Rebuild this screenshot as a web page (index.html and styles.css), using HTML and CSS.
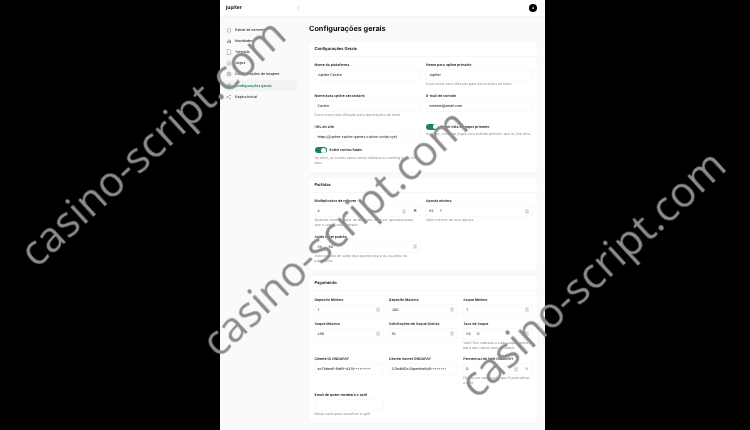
FILE: index.html
```html
<!DOCTYPE html>
<html lang="pt-BR">
<head>
    <meta charset="UTF-8">
    <title>Configurações gerais</title>
    <link rel="stylesheet" href="styles.css">
</head>
<body>
    <svg class="defs" width="0" height="0">
        <symbol id="stepper" viewBox="0 0 6 7">
            <rect x="0.4" y="0.4" width="5.2" height="6.2" rx="1" fill="#eee" stroke="#ccc" stroke-width="0.5"/>
            <path d="M2 2.9 3 1.9 4 2.9M2 4.1 3 5.1 4 4.1" fill="none" stroke="#555" stroke-width="0.6"/>
        </symbol>
    </svg>

    <div class="app">
        <!-- Top bar -->
        <header class="topbar">
            <div class="brand">
                <span class="brand-name">jupiter</span>
                <svg class="collapse" viewBox="0 0 6 8"><path d="M4 1 1.6 4 4 7" fill="none" stroke="#aaa" stroke-width="0.6"/></svg>
            </div>
            <div class="avatar">A</div>
        </header>

        <div class="layout">
            <!-- Sidebar -->
            <nav class="sidebar">
                <a class="nav-item">
                    <svg viewBox="0 0 12 12"><path d="M1.5 6 6 1.8 10.500 6M3 5v5.200h6V5" fill="none" stroke="#777" stroke-width="0.8"/></svg>
                    Painel de controle
                </a>
                <a class="nav-item">
                    <svg viewBox="0 0 12 12"><path d="M2 10V7h2v3zM5 10V3h2v7zM8 10V5h2v5z" fill="#777"/></svg>
                    Novidades
                </a>
                <a class="nav-item">
                    <svg viewBox="0 0 12 12"><path d="M2.500 1h5l2 2v8h-7z" fill="none" stroke="#777" stroke-width="0.8"/></svg>
                    Tutoriais
                </a>
                <a class="nav-item">
                    <svg viewBox="0 0 12 12"><path d="M6 1.500 10.500 5 6 8 1.500 5zM3 7v3h6V7" fill="none" stroke="#777" stroke-width="0.8"/></svg>
                    Jogos
                </a>
                <a class="nav-item">
                    <svg viewBox="0 0 12 12"><circle cx="6" cy="6" r="4.500" fill="#ccc" stroke="#888" stroke-width="0.6"/></svg>
                    Configurações de imagem
                </a>
                <a class="nav-item active">
                    <svg viewBox="0 0 12 12"><circle cx="6" cy="6" r="4.500" fill="none" stroke="#1f9d6c" stroke-width="1"/><circle cx="6" cy="6" r="2.200" fill="#1f9d6c"/></svg>
                    Configurações gerais
                </a>
                <a class="nav-item">
                    <svg viewBox="0 0 12 12"><path d="M2 6 8 3M2 6 8 9" fill="none" stroke="#777" stroke-width="0.8"/><circle cx="2" cy="6" r="1.200" fill="#777"/><circle cx="9" cy="2.500" r="1" fill="#777"/><circle cx="9" cy="9.500" r="1" fill="#777"/></svg>
                    Página inicial
                </a>
            </nav>

            <main class="content">
                <h1>Configurações gerais</h1>

                <!-- Configurações Gerais -->
                <section class="card">
                    <h2 class="card-title">Configurações Gerais</h2>
                    <div class="card-body cols-2">
                        <div class="field">
                            <label>Nome da plataforma</label>
                            <div class="input">Jupitor Casino</div>
                        </div>
                        <div class="field">
                            <label>Nome para upline primário</label>
                            <div class="input">Jupitor</div>
                            <p class="help">Esse nome será utilizado para decorações de texto</p>
                        </div>
                        <div class="field">
                            <label>Nome para upline secundário</label>
                            <div class="input">Casino</div>
                            <p class="help">Esse nome será utilizado para decorações de texto</p>
                        </div>
                        <div class="field">
                            <label>E-mail de contato</label>
                            <div class="input">contato@email.com</div>
                        </div>
                        <div class="field">
                            <label>URL do site</label>
                            <div class="input">https://jupiter-casino-games.casino-script.xyz/</div>
                        </div>
                        <div class="field">
                            <div class="switch-row"><span class="switch"></span><span class="switch-label">Exibir lista de jogos primeiro</span></div>
                            <p class="help">Se ativo, a lista de jogos será exibida primeiro que os live wins</p>
                        </div>
                        <div class="field">
                            <div class="switch-row"><span class="switch"></span><span class="switch-label">Exibir contas fakes</span></div>
                            <p class="help">Se ativo, as contas fakes serão exibidas no ranking e nos live wins</p>
                        </div>
                    </div>
                </section>

                <!-- Partidas -->
                <section class="card">
                    <h2 class="card-title">Partidas</h2>
                    <div class="card-body cols-2">
                        <div class="field">
                            <label>Multiplicador de rollover</label>
                            <div class="input number">
                                <span class="value">2</span>
                                <svg class="step"><use href="#stepper"/></svg>
                                <span class="suffix times">✕</span>
                            </div>
                            <p class="help">Quantas vezes o valor do depósito deve ser apostado para que o saque seja liberado</p>
                        </div>
                        <div class="field">
                            <label>Aposta mínima</label>
                            <div class="input number">
                                <span class="prefix">R$</span>
                                <span class="value">1</span>
                                <svg class="step"><use href="#stepper"/></svg>
                            </div>
                            <p class="help">Valor mínimo de uma aposta</p>
                        </div>
                        <div class="field">
                            <label>Saldo reset padrão</label>
                            <div class="input number">
                                <span class="prefix">R$</span>
                                <span class="value">50</span>
                                <svg class="step"><use href="#stepper"/></svg>
                            </div>
                            <p class="help">Valor padrão de saldo que aparece para os usuários na plataforma</p>
                        </div>
                    </div>
                </section>

                <!-- Pagamento -->
                <section class="card">
                    <h2 class="card-title">Pagamento</h2>
                    <div class="card-body cols-3">
                        <div class="field">
                            <label>Depósito Mínimo</label>
                            <div class="input number"><span class="value">1</span><svg class="step"><use href="#stepper"/></svg></div>
                        </div>
                        <div class="field">
                            <label>Depósito Máximo</label>
                            <div class="input number"><span class="value">300</span><svg class="step"><use href="#stepper"/></svg></div>
                        </div>
                        <div class="field">
                            <label>Saque Mínimo</label>
                            <div class="input number"><span class="value">1</span><svg class="step"><use href="#stepper"/></svg></div>
                        </div>
                        <div class="field">
                            <label>Saque Máximo</label>
                            <div class="input number"><span class="value">250</span><svg class="step"><use href="#stepper"/></svg></div>
                        </div>
                        <div class="field">
                            <label>Solicitações de Saque Diárias</label>
                            <div class="input number"><span class="value">10</span><svg class="step"><use href="#stepper"/></svg></div>
                        </div>
                        <div class="field">
                            <label>Taxa de Saque</label>
                            <div class="input number"><span class="prefix">R$</span><span class="value">0</span><svg class="step"><use href="#stepper"/></svg></div>
                            <p class="help">Valor fixo cobrado a cada saque, deixe 0 para não cobrar taxa de saque</p>
                        </div>
                        <div class="field">
                            <label>Cliente ID ONDAPAY</label>
                            <div class="input">ac79dee0-9a65-4218-••••••••</div>
                        </div>
                        <div class="field">
                            <label>Cliente Secret ONDAPAY</label>
                            <div class="input">COndNDo35pmhkeNyE••••••••</div>
                        </div>
                        <div class="field">
                            <label>Percentual de Split ONDAPAY</label>
                            <div class="input number"><span class="value">0</span><svg class="step"><use href="#stepper"/></svg><span class="suffix">%</span></div>
                            <p class="help">Defina um valor maior que 0 para ativar o split</p>
                        </div>
                        <div class="field">
                            <label>Email de quem receberá o split</label>
                            <div class="input"></div>
                            <p class="help">Deixe vazio para desativar o split</p>
                        </div>
                    </div>
                </section>
            </main>
        </div>
    </div>

    <!-- Watermarks over the screenshot -->
    <div class="watermark wm-1">casino-script.com</div>
    <div class="watermark wm-2">casino-script.com</div>
    <div class="watermark wm-3">casino-script.com</div>
</body>
</html>
```

FILE: styles.css
```css
* {
    margin: 0;
    padding: 0;
    box-sizing: border-box;
}

html, body {
    height: 430px;
    overflow: hidden;
}

body {
    position: relative;
    background-color: #000;
    font-family: Inter, "Liberation Sans", sans-serif;
    color: #222;
    text-rendering: geometricPrecision;
}

.defs {
    position: absolute;
}

.app {
    width: 325px;
    height: 430px;
    margin-left: 220px;
    background-color: #fafafa;
    overflow: hidden;
    filter: blur(0.2px);
}

/* Top bar */
.topbar {
    display: flex;
    align-items: center;
    justify-content: space-between;
    height: 16px;
    padding: 0 8px 0 6px;
    background-color: #fff;
    box-shadow: 0 0.5px 0 #eee;
}

.brand {
    display: flex;
    align-items: center;
    justify-content: space-between;
    width: 75px;
}

.brand-name {
    font-size: 5px;
    font-weight: 700;
    color: #111;
}

.collapse {
    width: 5px;
    height: 7px;
}

.avatar {
    display: flex;
    align-items: center;
    justify-content: center;
    width: 8px;
    height: 8px;
    border-radius: 50%;
    background-color: #000;
    color: #fff;
    font-size: 3px;
    font-weight: 600;
}

.layout {
    display: flex;
}

/* Sidebar */
.sidebar {
    display: flex;
    flex-direction: column;
    width: 80px;
    flex-shrink: 0;
    padding: 8px 3px 0 4px;
}

.nav-item {
    display: flex;
    align-items: center;
    gap: 3px;
    height: 11.2px;
    padding-left: 2px;
    border-radius: 2px;
    font-size: 3.500px;
    font-weight: 600;
    color: #444;
}

.nav-item svg {
    width: 6px;
    height: 6px;
    flex-shrink: 0;
}

.nav-item.active {
    background-color: #f3f3f3;
    color: #17915f;
    font-weight: 700;
}

/* Main content */
.content {
    flex: 1;
    padding: 7px 8px 0 9px;
}

h1 {
    height: 19px;
    font-size: 7.300px;
    line-height: 12px;
    font-weight: 700;
    color: #111;
}

.card {
    margin-bottom: 6.250px;
    background-color: #fff;
    box-shadow: 0 0 1px rgba(0, 0, 0, 0.12);
    border-radius: 3px;
}

.card-title {
    height: 14px;
    padding-left: 5.500px;
    box-shadow: 0 0.5px 0 #f0f0f0;
    font-size: 4px;
    line-height: 13px;
    font-weight: 700;
    color: #222;
}

.card-body {
    display: grid;
    column-gap: 6px;
    row-gap: 5.750px;
    padding: 6px 5.500px;
}

.cols-2 {
    grid-template-columns: 1fr 1fr;
}

.cols-3 {
    grid-template-columns: 1fr 1fr 1fr;
    padding-top: 6.750px;
}

/* Form fields */
.field label {
    display: block;
    margin-bottom: 1px;
    font-size: 3.550px;
    line-height: 7px;
    font-weight: 600;
    color: #222;
}

.input {
    display: flex;
    align-items: center;
    height: 10px;
    padding: 0 3px;
    background-color: #fff;
    box-shadow: 0 0 1px rgba(0, 0, 0, 0.2);
    border-radius: 2px;
    font-size: 3.500px;
    font-weight: 500;
    color: #333;
    white-space: nowrap;
    overflow: hidden;
}

.number .value {
    flex: 1;
}

.prefix {
    width: 11px;
    color: #666;
}

.step {
    width: 4px;
    height: 5px;
    flex-shrink: 0;
}

.suffix {
    width: 11px;
    flex-shrink: 0;
    text-align: right;
    color: #666;
}

.times {
    font-size: 4.500px;
    font-weight: 700;
    color: #3a3a6a;
}

.help {
    margin-top: 2px;
    font-size: 3.550px;
    line-height: 5px;
    color: #888;
}

.switch-row {
    display: flex;
    align-items: center;
    gap: 3px;
    height: 6px;
}

.switch {
    position: relative;
    width: 12px;
    height: 6px;
    border-radius: 3px;
    background-color: #17855c;
}

.switch::after {
    content: "";
    position: absolute;
    top: 0.500px;
    right: 0.500px;
    width: 5px;
    height: 5px;
    border-radius: 50%;
    background-color: #fff;
}

.switch-label {
    font-size: 3.550px;
    font-weight: 600;
    color: #222;
}

.switch-row + .help {
    margin-top: 2.500px;
}

/* Watermarks */
.watermark {
    position: absolute;
    transform: translate(-50%, -50%) rotate(-42.500deg);
    font-family: "Open Sans", sans-serif;
    font-size: 42px;
    font-weight: 500;
    color: #8c8c8c;
    white-space: nowrap;
    filter: blur(0.3px);
}

.wm-1 {
    left: 152px;
    top: 142px;
}

.wm-2 {
    left: 334px;
    top: 232px;
}

.wm-3 {
    left: 592px;
    top: 273px;
}
```
